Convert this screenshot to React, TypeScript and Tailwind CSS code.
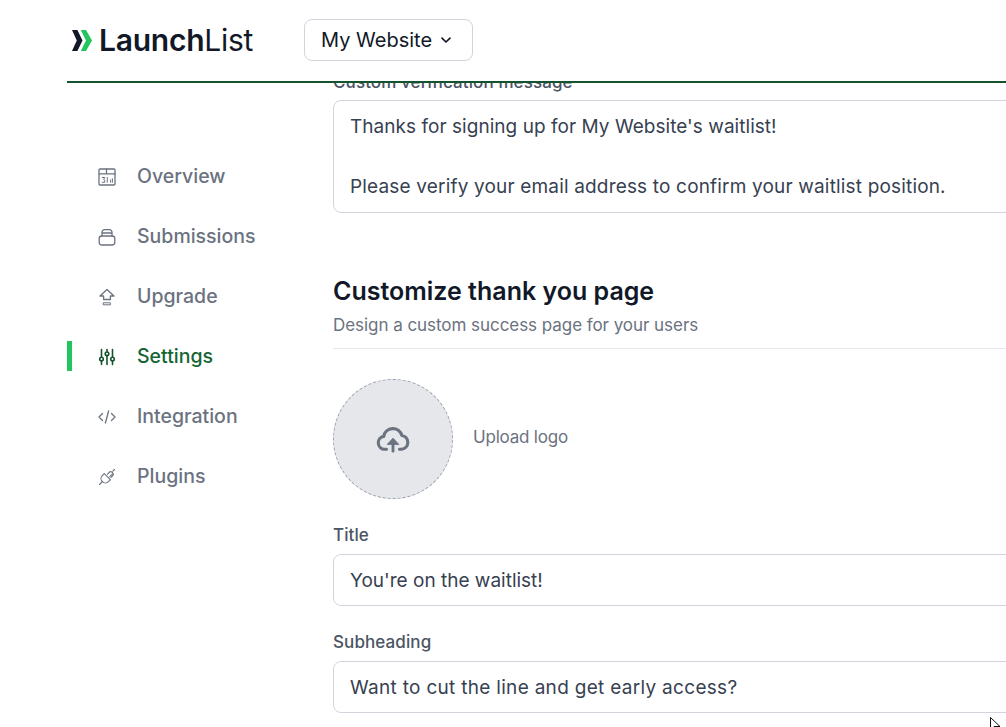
import React from "react";

const font = { fontFamily: '"Inter", "Liberation Sans", sans-serif' };

function Svg({ children }: { children: React.ReactNode }) {
  return (
    <svg viewBox="0 0 18 18" fill="none" stroke="currentColor" strokeWidth="1.3" strokeLinecap="round" strokeLinejoin="round" className="w-[18px] h-[18px]">
      {children}
    </svg>
  );
}

const OverviewIcon = () => (
  <Svg>
    <rect x="1" y="1" width="16" height="16" rx="1" />
    <path d="M1 5.800h16M8.500 1v4.800" />
    <path d="M4.200 9.500h2.600l-1.200 2 1.200.6v2.200H4.200M9.300 9.500v4.800M12.600 12v2.300M14.400 10.800v3.500" strokeWidth="1" />
  </Svg>
);
const SubmissionsIcon = () => (
  <Svg>
    <rect x="1.200" y="8" width="15.600" height="9" rx="2.400" />
    <path d="M4 8V4.200A2.600 2.600 0 0 1 6.600 1.600h4.800A2.600 2.600 0 0 1 14 4.200V8M4 5h10" />
  </Svg>
);
const UpgradeIcon = () => (
  <Svg>
    <path d="M9 1.500 2 8h3.600v3.500h6.800V8H16z" />
    <path d="M5.600 14.800h6.800v2H5.600z" strokeWidth="1" />
  </Svg>
);
const SettingsIcon = () => (
  <Svg>
    <g strokeWidth="1.600">
      <path d="M3.500 1.500v7M3.500 13v3.500M9 1.500v2M9 8v8.500M14.500 1.500v7M14.500 13v3.500" />
      <circle cx="3.500" cy="11" r="1.800" />
      <circle cx="9" cy="5.800" r="1.800" />
      <circle cx="14.500" cy="11" r="1.800" />
    </g>
  </Svg>
);
const IntegrationIcon = () => (
  <Svg>
    <path d="M4.500 5.500 1 9l3.500 3.500M13.500 5.500 17 9l-3.500 3.500M10.600 3 7.400 15" strokeWidth="1.300" />
  </Svg>
);
const PluginsIcon = () => (
  <Svg>
    <g strokeWidth="1.100">
      <path d="M6.300 5.600 12.400 11.700 10.400 13.700A4.300 4.300 0 0 1 4.300 7.600z" />
      <path d="M4.600 13.400 1.500 16.500M9.500 6.200l2.700-2.700M11.800 8.600l2.700-2.700M10 5.700l1.600-1.600c.7-.7 2.200-.3 3 .5.8.8 1.100 2.100.4 2.900L13 9.400" />
      <path d="M14.800 3.200 16.500 1.500" />
    </g>
  </Svg>
);

const nav = [
  { label: "Overview", Icon: OverviewIcon },
  { label: "Submissions", Icon: SubmissionsIcon },
  { label: "Upgrade", Icon: UpgradeIcon },
  { label: "Settings", Icon: SettingsIcon, active: true },
  { label: "Integration", Icon: IntegrationIcon },
  { label: "Plugins", Icon: PluginsIcon },
];

function Field({ label, value, tracking }: { label: string; value: string; tracking: string }) {
  return (
    <div className="flex flex-col">
      <label className="text-[17px] leading-[24px] font-medium tracking-[0.1px] text-[#4b5563] mb-[7px]">{label}</label>
      <div className={`h-[52px] rounded-[8px] border border-[#d1d5db] bg-white pl-4 pt-[2px] flex items-center text-[19px] text-[#374151] whitespace-nowrap ${tracking}`}>
        {value}
      </div>
    </div>
  );
}

export default function App() {
  return (
    <div style={font} className="w-[1006px] h-[727px] bg-white overflow-hidden relative flex flex-col pl-[67px]">
      <header className="h-[83px] shrink-0 border-b-2 border-[#14532d] flex items-center pb-[1px]">
        <div className="flex items-center w-[237px] pl-[5px]">
          <svg viewBox="0 0 20 21" className="w-[20px] h-[21px] shrink-0">
            <path d="M0 0h5.400L10.500 10.500 5.400 21H0l4.800-10.500z" fill="#111827" />
            <path d="M8.800 0h5.200L20 10.500 14 21H8.800l5.200-10.500z" fill="#22c55e" />
          </svg>
          <span className="ml-[7px] text-[30px] leading-none tracking-[-0.25px] text-[#111827] font-semibold">
            Launch<span className="font-normal">List</span>
          </span>
        </div>
        <button className="h-[42px] w-[169px] rounded-[8px] border border-[#d1d5db] bg-white flex items-center justify-start pl-[16px] gap-[8px] text-[20px] font-normal text-[#111827]">
          My Website
          <svg viewBox="0 0 12 12" className="w-[12px] h-[12px]" fill="none" stroke="currentColor" strokeWidth="1.700" strokeLinecap="round" strokeLinejoin="round">
            <path d="M2 4.200 6 8l4-3.800" />
          </svg>
        </button>
      </header>

      <div className="flex flex-1 min-h-0">
        <aside className="w-[266px] shrink-0 pt-[64px] flex flex-col">
          {nav.map(({ label, Icon, active }) => (
            <div key={label} className="h-[60px] flex items-center relative pl-[31px]">
              {active && <span className="absolute left-0 top-[14px] w-[5px] h-[30px] bg-[#22c55e]" />}
              <span className={active ? "text-[#14532d]" : "text-[#6b7280]"}>
                <Icon />
              </span>
              <span className={`ml-[21px] text-[19.500px] font-medium ${active ? "text-[#166534]" : "text-[#6b7280]"}`}>{label}</span>
            </div>
          ))}
        </aside>

        <main className="flex-1 min-w-0 overflow-hidden">
          <div className="w-[700px] -mt-[13px]">
            <label className="block text-[17px] leading-[24px] font-medium tracking-[0.1px] text-[#4b5563] mb-[6px]">Custom verification message</label>
            <div className="h-[113px] rounded-[8px] border border-[#d1d5db] bg-white pl-4 pt-[11px] text-[19px] leading-[30px] text-[#374151] whitespace-nowrap">
              <div className="tracking-[0.04px]">Thanks for signing up for My Website's waitlist!</div>
              <div className="h-[30px]" />
              <div className="tracking-[0.17px]">Please verify your email address to confirm your waitlist position.</div>
            </div>

            <h2 className="mt-[62px] text-[25px] leading-[32px] font-semibold text-[#111827]">Customize thank you page</h2>
            <p className="mt-[6px] text-[17px] leading-[24px] tracking-[-0.05px] text-[#6b7280] pb-[11px] border-b border-[#e5e7eb]">
              Design a custom success page for your users
            </p>

            <div className="mt-[30px] flex items-center gap-[20px]">
              <div className="w-[120px] h-[120px] rounded-full bg-[#e5e7eb] border border-dashed border-[#9ca3af] flex items-center justify-center text-[#6b7280]">
                <svg viewBox="0 0 36 28" className="w-[34px] h-[26px] mt-[2px]" fill="none" stroke="currentColor" strokeWidth="3.400" strokeLinecap="round" strokeLinejoin="round">
                  <path d="M11 24H9a7 7 0 0 1-1-13.900 10 10 0 0 1 19.500-1A7.500 7.500 0 0 1 27 24h-2" />
                  <path d="M18 26V15" strokeWidth="3" />
                  <path d="M12 18.500 18 12l6 6.500z" fill="currentColor" strokeWidth="1" />
                </svg>
              </div>
              <span className="text-[17px] tracking-[-0.2px] pb-[2px] text-[#6b7280]">Upload logo</span>
            </div>

            <div className="mt-[24px] flex flex-col gap-[24px]">
              <Field label="Title" value="You're on the waitlist!" tracking="tracking-[0px]" />
              <Field label="Subheading" value="Want to cut the line and get early access?" tracking="tracking-[0.3px]" />
            </div>
          </div>
        </main>
      </div>

      <svg viewBox="0 0 12 14" className="absolute left-[990px] top-[717px] w-[12px] h-[14px]" fill="white" stroke="#111" strokeWidth="1">
        <path d="M0.500 0.500V13L4 9.500h6z" />
      </svg>
    </div>
  );
}
